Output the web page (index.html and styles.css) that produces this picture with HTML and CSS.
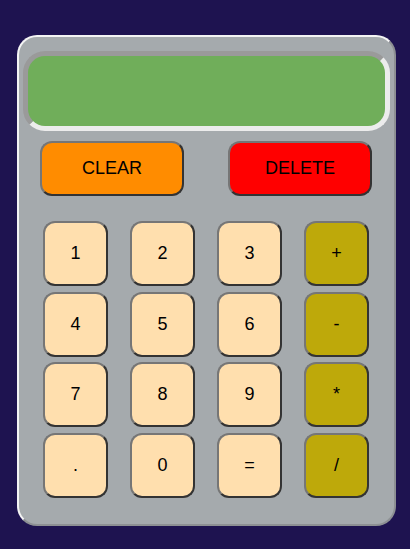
FILE: index.html
```html
<!DOCTYPE html>
<html>
<head>
<meta charset="utf-8">
<link rel="stylesheet" href="styles.css">
</head>
<body>
<div class="calc">
  <div class="display"></div>
  <div class="actions">
    <button class="btn act clear">CLEAR</button>
    <button class="btn act delete">DELETE</button>
  </div>
  <div class="keys">
    <button class="btn key">1</button>
    <button class="btn key">2</button>
    <button class="btn key">3</button>
    <button class="btn key op">+</button>
    <button class="btn key">4</button>
    <button class="btn key">5</button>
    <button class="btn key">6</button>
    <button class="btn key op">-</button>
    <button class="btn key">7</button>
    <button class="btn key">8</button>
    <button class="btn key">9</button>
    <button class="btn key op">*</button>
    <button class="btn key">.</button>
    <button class="btn key">0</button>
    <button class="btn key">=</button>
    <button class="btn key op">/</button>
  </div>
</div>
</body>
</html>
```
FILE: styles.css
```css
html, body {
  margin: 0;
  padding: 0;
  background: #1e1350;
  height: 100%;
}
body {
  padding: 35px 0 0 17px;
  box-sizing: border-box;
  font-family: "Liberation Sans", Arial, sans-serif;
}
.calc {
  width: 379px;
  height: 491px;
  box-sizing: border-box;
  background: #a5aaad;
  border: 2px solid;
  border-color: #f4f4f4 #8d9093 #8d9093 #f4f4f4;
  border-radius: 20px;
  padding: 14px 4px 0 4px;
}
.display {
  height: 80px;
  box-sizing: border-box;
  background: #70ae5a;
  border: 5px solid;
  border-color: #9a9a9a #ececec #ececec #9a9a9a;
  border-radius: 22px;
}
.actions {
  display: flex;
  justify-content: space-between;
  padding: 10px 18px 0 17px;
}
.btn {
  font-family: "Liberation Sans", Arial, sans-serif;
  color: #000;
  border: 2px solid;
  border-color: #767676 #333 #333 #767676;
  box-sizing: border-box;
  padding: 0;
  margin: 0;
}
.act {
  width: 144px;
  height: 55px;
  border-radius: 12px;
  font-size: 18px;
}
.clear { background: #ff8c00; }
.delete { background: #ff0000; }
.keys {
  display: grid;
  grid-template-columns: repeat(4, 65px);
  grid-template-rows: repeat(4, 65px);
  column-gap: 22px;
  row-gap: 5.5px;
  padding: 25px 0 0 20px;
}
.key {
  background: #ffdfae;
  border-radius: 12px;
  font-size: 18px;
}
.op { background: #bea90a; }
```
